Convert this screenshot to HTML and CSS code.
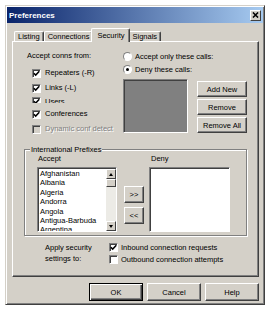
FILE: index.html
```html
<!DOCTYPE html>
<html lang="en">
<head>
  <meta charset="UTF-8">
  <title>Preferences</title>
  <link rel="stylesheet" href="styles.css">
</head>
<body>
  <div class="dialog">
    <div class="titlebar">
      <span class="title">Preferences</span>
      <span class="close">
        <svg width="7" height="6" viewBox="0 0 8 7"><path d="M1 0.5l6 6M7 0.5l-6 6" stroke="#000" stroke-width="1.7"/></svg>
      </span>
    </div>

    <div class="content">
      <div class="tabs">
        <div class="tab">Listing</div>
        <div class="tab">Connections</div>
        <div class="tab active">Security</div>
        <div class="tab">Signals</div>
      </div>

      <div class="panel">
        <div class="top">
          <div class="accept-from">
            <div class="caption">Accept conns from:</div>
            <div class="check"><span class="box"><svg width="7" height="7" viewBox="0 0 7 7"><path d="M0.8 3.2l1.9 1.9 3.6-3.8" stroke="#000" stroke-width="1.5" fill="none"/></svg></span>Repeaters (-R)</div>
            <div class="check"><span class="box"><svg width="7" height="7" viewBox="0 0 7 7"><path d="M0.8 3.2l1.9 1.9 3.6-3.8" stroke="#000" stroke-width="1.5" fill="none"/></svg></span>Links (-L)</div>
            <div class="check users"><span class="box"><svg width="7" height="7" viewBox="0 0 7 7"><path d="M0.8 3.2l1.9 1.9 3.6-3.8" stroke="#000" stroke-width="1.5" fill="none"/></svg></span>Users</div>
            <div class="check"><span class="box"><svg width="7" height="7" viewBox="0 0 7 7"><path d="M0.8 3.2l1.9 1.9 3.6-3.8" stroke="#000" stroke-width="1.5" fill="none"/></svg></span>Conferences</div>
            <div class="check disabled"><span class="box"></span>Dynamic conf detect</div>
          </div>

          <div class="calls">
            <div class="radio"><span class="circle"></span>Accept only these calls:</div>
            <div class="radio selected"><span class="circle"></span>Deny these calls:</div>
            <div class="calls-body">
              <div class="call-list"></div>
              <div class="call-buttons">
                <button>Add New</button>
                <button>Remove</button>
                <button>Remove All</button>
              </div>
            </div>
          </div>
        </div>

        <fieldset class="prefixes">
          <legend>International Prefixes</legend>
          <div class="prefix-row">
            <div class="prefix-col accept">
              <div class="col-label">Accept</div>
              <div class="listbox">
                <ul>
                  <li>Afghanistan</li>
                  <li>Albania</li>
                  <li>Algeria</li>
                  <li>Andorra</li>
                  <li>Angola</li>
                  <li>Antigua-Barbuda</li>
                  <li>Argentina</li>
                </ul>
                <div class="scrollbar">
                  <span class="arrow up"></span>
                  <span class="thumb"></span>
                  <span class="track"></span>
                  <span class="arrow down"></span>
                </div>
              </div>
            </div>
            <div class="move-buttons">
              <button>&gt;&gt;</button>
              <button>&lt;&lt;</button>
            </div>
            <div class="prefix-col deny">
              <div class="col-label">Deny</div>
              <div class="listbox"></div>
            </div>
          </div>
        </fieldset>

        <div class="apply">
          <div class="apply-label">Apply security<br>settings to:</div>
          <div class="apply-options">
            <div class="option"><span class="box"><svg width="7" height="7" viewBox="0 0 7 7"><path d="M0.8 3.2l1.9 1.9 3.6-3.8" stroke="#000" stroke-width="1.5" fill="none"/></svg></span>Inbound connection requests</div>
            <div class="option"><span class="box"></span>Outbound connection attempts</div>
          </div>
        </div>
      </div>

      <div class="actions">
        <button class="default">OK</button>
        <button>Cancel</button>
        <button>Help</button>
      </div>
    </div>
  </div>
</body>
</html>
```

FILE: styles.css
```css
body {
  margin: 0;
  background: #fff;
  font-family: "Liberation Sans", Arial, sans-serif;
  font-size: 7.5px;
  color: #000;
}

.dialog {
  width: 260px;
  height: 300px;
  margin: 5px 0 0 5px;
  box-sizing: border-box;
  padding: 1px;
  background: #d4d0c8;
  border: 1px solid;
  border-color: #d4d0c8 #404040 #404040 #d4d0c8;
  box-shadow: inset 1px 1px #fff, inset -1px -1px #808080;
}

.titlebar {
  height: 16px;
  display: flex;
  align-items: center;
  justify-content: space-between;
  padding: 0 2px 0 2px;
  background: linear-gradient(to right, #0a246a, #a6caf0);
  color: #fff;
  font-weight: bold;
  font-size: 8px;
}

.close {
  width: 11px;
  height: 11px;
  box-sizing: border-box;
  display: flex;
  align-items: center;
  justify-content: center;
  background: #d4d0c8;
  border: 1px solid;
  border-color: #fff #404040 #404040 #fff;
}

.content {
  padding: 5px 4px 0 5px;
}

.tabs {
  display: flex;
  align-items: flex-end;
  height: 13px;
  padding-left: 2px;
  position: relative;
  z-index: 1;
}

.tab {
  height: 10px;
  box-sizing: border-box;
  padding: 0 3px;
  line-height: 9px;
  background: #d4d0c8;
  border: 1px solid;
  border-bottom: none;
  border-color: #fff #404040 #404040 #fff;
  border-radius: 2px 2px 0 0;
  box-shadow: inset -1px 0 #808080;
}

  .tab.active {
    height: 14px;
    margin: 0 -2px -1px;
    padding: 2px 5px 0;
    position: relative;
    z-index: 1;
  }

.panel {
  height: 236px;
  box-sizing: border-box;
  border: 1px solid;
  border-color: #fff #404040 #404040 #fff;
  box-shadow: inset -1px -1px #808080;
}

.top {
  display: flex;
  padding: 9px 0 0 14px;
}

.accept-from {
  width: 96px;
}

.caption {
  height: 10px;
  line-height: 10px;
  margin-bottom: 7px;
}

.check,
.option {
  display: flex;
  align-items: center;
  gap: 4px;
  height: 10px;
  line-height: 10px;
  white-space: nowrap;
}

.check {
  margin: 0 0 5px 5px;
}

  .check.users {
    height: 6px;
    margin-top: -1px;
    margin-bottom: 6px;
    overflow: hidden;
    align-items: flex-start;
  }

  .check.disabled {
    color: #808080;
    text-shadow: 1px 1px #fff;
  }

  .check.disabled .box {
    background: #d4d0c8;
  }

.box {
  width: 9px;
  height: 9px;
  flex: none;
  box-sizing: border-box;
  display: flex;
  align-items: center;
  justify-content: center;
  background: #fff;
  border: 1px solid;
  border-color: #808080 #fff #fff #808080;
  box-shadow: inset 1px 1px #404040;
}

.calls {
  display: flex;
  flex-direction: column;
}

.radio {
  display: flex;
  align-items: center;
  gap: 3px;
  height: 10px;
  margin-bottom: 3px;
  white-space: nowrap;
}

.circle {
  width: 9px;
  height: 9px;
  flex: none;
  box-sizing: border-box;
  display: flex;
  align-items: center;
  justify-content: center;
  border-radius: 50%;
  background: #fff;
  border: 1px solid;
  border-color: #808080 #fff #fff #808080;
}

  .radio.selected .circle::after {
    content: "";
    width: 3px;
    height: 3px;
    border-radius: 50%;
    background: #000;
  }

.calls-body {
  display: flex;
  margin-top: 2px;
}

.call-list {
  width: 65px;
  height: 54px;
  box-sizing: border-box;
  background: #808080;
  border: 1px solid;
  border-color: #808080 #fff #fff #808080;
  box-shadow: inset 1px 1px #404040;
}

.call-buttons {
  display: flex;
  flex-direction: column;
  gap: 2px;
  margin-left: 9px;
  padding-top: 2px;
}

  .call-buttons button {
    width: 50px;
    height: 16px;
  }

button {
  font-family: inherit;
  font-size: 7.5px;
  color: #000;
  padding: 0;
  background: #d4d0c8;
  border: 1px solid;
  border-color: #fff #404040 #404040 #fff;
  box-shadow: inset -1px -1px #808080;
  white-space: nowrap;
}

  button.default {
    border-color: #000;
    box-shadow: inset 1px 1px #fff, inset -1px -1px #404040, inset -2px -2px #808080;
  }

.prefixes {
  width: 223px;
  box-sizing: border-box;
  margin: 6px 0 0 11px;
  padding: 0 0 3px 5px;
  min-width: 0;
  border: 1px solid #808080;
  box-shadow: 1px 1px #fff, inset 1px 1px #fff;
}

  .prefixes legend {
    padding: 0 1px;
    line-height: 9px;
    background: #d4d0c8;
  }

.prefix-row {
  display: flex;
  margin-left: 7px;
}

.prefix-col.accept {
  width: 80px;
}

.prefix-col.deny {
  width: 81px;
  margin-left: 5px;
}

.col-label {
  height: 9px;
  line-height: 9px;
  padding-left: 1px;
  margin-bottom: 4px;
}

.deny .col-label {
  padding-left: 2px;
}

.listbox {
  display: flex;
  height: 65px;
  box-sizing: border-box;
  overflow: hidden;
  background: #fff;
  border: 1px solid;
  border-color: #808080 #fff #fff #808080;
  box-shadow: inset 1px 1px #404040;
}

  .listbox ul {
    flex: 1;
    margin: 0;
    padding: 1px 0 0 2px;
    list-style: none;
    line-height: 9.4px;
    white-space: nowrap;
    overflow: hidden;
  }

.scrollbar {
  width: 10px;
  margin: 1px 0 0;
  display: flex;
  flex-direction: column;
  background: #ecebe6;
}

  .scrollbar .arrow,
  .scrollbar .thumb {
    box-sizing: border-box;
    background: #d4d0c8;
    border: 1px solid;
    border-color: #fff #404040 #404040 #fff;
    display: flex;
    align-items: center;
    justify-content: center;
  }

  .scrollbar .arrow {
    height: 10px;
  }

  .scrollbar .thumb {
    height: 8px;
  }

  .scrollbar .track {
    flex: 1;
  }

  .arrow.up::after {
    content: "";
    border: 2.5px solid transparent;
    border-top: none;
    border-bottom: 3px solid #000;
  }

  .arrow.down::after {
    content: "";
    border: 2.5px solid transparent;
    border-bottom: none;
    border-top: 3px solid #000;
  }

.move-buttons {
  display: flex;
  flex-direction: column;
  gap: 4px;
  margin-left: 7px;
  padding-top: 32px;
}

  .move-buttons button {
    width: 20px;
    height: 17px;
  }

.apply {
  display: flex;
  margin: 6px 0 0 32px;
}

.apply-label {
  width: 64px;
  line-height: 11px;
}

.apply-options {
  display: flex;
  flex-direction: column;
  gap: 1px;
}

  .apply-options .option {
    height: 11px;
    gap: 3px;
  }

.actions {
  display: flex;
  justify-content: flex-end;
  gap: 4px;
  margin-top: 6px;
}

  .actions button {
    width: 54px;
    height: 18px;
  }
```
